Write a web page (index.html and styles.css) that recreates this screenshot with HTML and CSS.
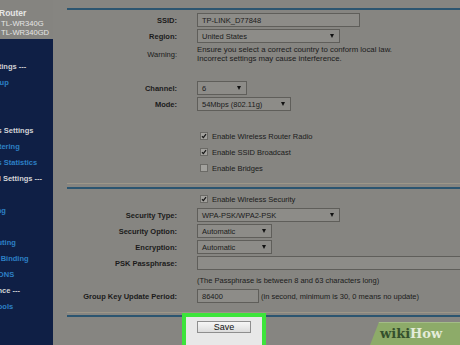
FILE: index.html
```html
<!DOCTYPE html>
<html lang="en">
<head>
  <meta charset="UTF-8">
  <meta name="viewport" content="width=device-width, initial-scale=1.0">
  <title>Wireless Settings</title>
  <link rel="stylesheet" href="styles.css">
</head>
<body>
  <div class="page">

    <aside class="sidebar">
      <div class="brand">
        <div class="brand-name">Router</div>
        <div class="brand-model">TL-WR340G</div>
        <div class="brand-model">TL-WR340GD</div>
      </div>
      <ul class="menu">
        <li class="link">Status</li>
        <li class="head">Basic Settings ---</li>
        <li class="link">Quick Setup</li>
        <li class="link">Network</li>
        <li class="link">Wireless</li>
        <li class="head sub">Wireless Settings</li>
        <li class="link sub">MAC Filtering</li>
        <li class="link sub">Wireless Statistics</li>
        <li class="head">Advanced Settings ---</li>
        <li class="link">DHCP</li>
        <li class="link">Forwarding</li>
        <li class="link">Security</li>
        <li class="link">Static Routing</li>
        <li class="link">IP &amp; MAC Binding</li>
        <li class="link">Dynamic DNS</li>
        <li class="head">Maintenance ---</li>
        <li class="link">System Tools</li>
      </ul>
    </aside>

    <main class="content">
      <div class="rule"></div>

      <div class="row">
        <span class="label">SSID:</span>
        <div class="field ssid">TP-LINK_D77848</div>
      </div>
      <div class="row">
        <span class="label">Region:</span>
        <div class="field select wide">United States</div>
      </div>
      <div class="row warning">
        <span class="label plain">Warning:</span>
        <div class="note">Ensure you select a correct country to conform local law.<br>Incorrect settings may cause interference.</div>
      </div>

      <div class="row gap-before">
        <span class="label">Channel:</span>
        <div class="field select tiny">6</div>
      </div>
      <div class="row">
        <span class="label">Mode:</span>
        <div class="field select mode">54Mbps (802.11g)</div>
      </div>

      <div class="row gap-row">
        <span></span>
        <label class="check"><span class="box checked"></span>Enable Wireless Router Radio</label>
      </div>
      <div class="row">
        <span></span>
        <label class="check"><span class="box checked"></span>Enable SSID Broadcast</label>
      </div>
      <div class="row">
        <span></span>
        <label class="check"><span class="box"></span>Enable Bridges</label>
      </div>

      <div class="divider"></div>

      <div class="row after-divider">
        <span></span>
        <label class="check"><span class="box checked"></span>Enable Wireless Security</label>
      </div>
      <div class="row">
        <span class="label">Security Type:</span>
        <div class="field select wide">WPA-PSK/WPA2-PSK</div>
      </div>
      <div class="row">
        <span class="label">Security Option:</span>
        <div class="field select short">Automatic</div>
      </div>
      <div class="row">
        <span class="label">Encryption:</span>
        <div class="field select short">Automatic</div>
      </div>
      <div class="row">
        <span class="label">PSK Passphrase:</span>
        <div class="field pass"></div>
      </div>
      <div class="row hint-row">
        <span></span>
        <span class="hint">(The Passphrase is between 8 and 63 characters long)</span>
      </div>
      <div class="row">
        <span class="label">Group Key Update Period:</span>
        <div class="inline">
          <div class="field period">86400</div>
          <span>(in second, minimum is 30, 0 means no update)</span>
        </div>
      </div>

      <div class="divider bottom"></div>

      <div class="actions">
        <button class="save">Save</button>
      </div>

      <!-- highlight drawn over the page -->
      <div class="highlight"></div>

      <div class="wikihow"><span class="wiki">wiki</span><span class="how">How</span></div>
    </main>

  </div>
</body>
</html>
```

FILE: styles.css
```css
body {
  margin: 0;
  font-family: "Liberation Sans", Arial, sans-serif;
  background-color: #868581;
}

.page {
  display: flex;
  width: 460px;
  height: 345px;
  overflow: hidden;
}

/* Left menu */
.sidebar {
  width: 53px;
  flex: none;
  background-color: #0f1f45;
  overflow: hidden;
}

.brand {
  height: 39px;
  box-sizing: border-box;
  padding-top: 8px;
  background-color: #858480;
  color: #e6e6e6;
  white-space: nowrap;
}

.brand-name {
  margin-left: -1px;
  font-size: 8.5px;
  font-weight: bold;
  line-height: 11px;
}

.brand-model {
  padding-left: 1px;
  font-size: 7.6px;
  line-height: 9px;
}

.menu {
  list-style: none;
  margin: 0 0 0 -35px;
  padding: 4px 0 0;
  font-size: 7.5px;
  font-weight: bold;
  line-height: 16px;
  white-space: nowrap;
}

.menu .link {
  color: #2d80c6;
}

.menu .head {
  color: #d2d3d6;
}

.menu .sub {
  padding-left: 6px;
}

/* Main form */
.content {
  flex: 1;
  min-width: 0;
  position: relative;
  padding: 8px 0 0 14px;
  color: #1b1b1b;
  font-size: 7.5px;
  white-space: nowrap;
}

.rule {
  height: 2px;
  margin-bottom: 2px;
  background-color: #2c5570;
}

.row {
  display: grid;
  grid-template-columns: 110px auto;
  column-gap: 20px;
  align-items: center;
  height: 16px;
}

.label {
  text-align: right;
  font-weight: bold;
}

.label.plain {
  font-weight: normal;
}

.warning {
  height: auto;
  margin-top: 1px;
}

.note {
  line-height: 9px;
  font-size: 7.8px;
}

.gap-before {
  margin-top: 17px;
}

.gap-row {
  margin-top: 16px;
}

.hint-row {
  margin-top: 1px;
}

.field {
  box-sizing: border-box;
  height: 14px;
  padding: 0 4px;
  display: flex;
  align-items: center;
  justify-content: space-between;
  border: 1px solid #5f5e5a;
  background-color: #8d8c88;
  color: #1b1b1b;
}

.select::after {
  content: "";
  margin-right: 1px;
  border-left: 2.5px solid transparent;
  border-right: 2.5px solid transparent;
  border-top: 4px solid #111;
}

.ssid { width: 163px; }
.wide { width: 143px; }
.tiny { width: 50px; }
.mode { width: 94px; }
.short { width: 75px; }
.pass { width: 300px; }
.period { width: 62px; }

.inline {
  display: flex;
  align-items: center;
  gap: 2px;
}

/* Checkboxes */
.check {
  display: flex;
  align-items: center;
  gap: 4px;
  padding-left: 3px;
}

.box {
  width: 8px;
  height: 8px;
  box-sizing: border-box;
  border: 1px solid #6b6a66;
  background-color: #a2a19d;
}

.box.checked {
  background-image: url("data:image/svg+xml,%3Csvg xmlns='http://www.w3.org/2000/svg' viewBox='0 0 6 6'%3E%3Cpath d='M1 3.2 L2.4 4.6 L5 1.2' fill='none' stroke='%23181818' stroke-width='1.3'/%3E%3C/svg%3E");
  background-size: 6px 6px;
  background-repeat: no-repeat;
}

.divider {
  margin-top: 7px;
  height: 6px;
  box-sizing: border-box;
  border-top: 1px solid #9d9789;
  border-bottom: 2px solid #2c5570;
}

.after-divider {
  margin-top: 2px;
}

.divider.bottom {
  margin-top: 8px;
  height: 5px;
}

/* Save button */
.actions {
  padding-left: 130px;
  margin-top: 4px;
}

.save {
  position: relative;
  z-index: 2;
  width: 54px;
  height: 12px;
  padding: 0;
  box-sizing: border-box;
  border: 1px solid #8e8e8e;
  background: linear-gradient(#f6f6f6, #dcdcdc);
  font-family: "Liberation Sans", Arial, sans-serif;
  font-size: 9px;
  line-height: 10px;
  color: #111;
}

.highlight {
  position: absolute;
  left: 129px;
  top: 313px;
  width: 84px;
  height: 40px;
  box-sizing: border-box;
  border: 4px solid #3de43b;
  background-color: #e8e8e8;
  z-index: 1;
}

.wikihow {
  position: absolute;
  right: 0;
  bottom: 0;
  width: 90px;
  height: 23px;
  box-sizing: border-box;
  padding-left: 10px;
  border-top: 1px solid #a3bd86;
  background-color: #8dab69;
  clip-path: polygon(9px 0, 100% 0, 100% 100%, 0 100%);
  font-family: "DejaVu Serif", serif;
  font-size: 13px;
  font-weight: bold;
  line-height: 21px;
  z-index: 3;
}

.wiki {
  color: #34502c;
}

.how {
  color: #e4ecda;
}
```
